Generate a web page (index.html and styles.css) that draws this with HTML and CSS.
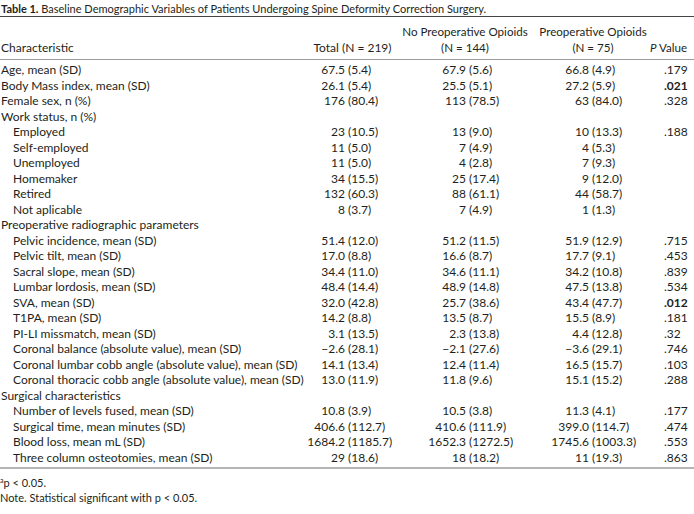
FILE: index.html
```html
<!DOCTYPE html>
<html>
<head>
<meta charset="utf-8">
<link rel="stylesheet" href="styles.css">
</head>
<body>
<div class="caption"><b>Table 1.</b> Baseline Demographic Variables of Patients Undergoing Spine Deformity Correction Surgery.</div>
<table class="tbl">
<colgroup><col class="c1"><col class="c2"><col class="c3"><col class="c4"><col class="c5"></colgroup>
<thead>
<tr><th class="h1">Characteristic</th><th class="hc">Total (N = 219)</th><th class="hc hs">No Preoperative Opioids<br>(N = 144)</th><th class="hc hc4 hs">Preoperative Opioids<br>(N = 75)</th><th class="hp hs"><i>P</i> Value</th></tr>
</thead>
<tbody>
<tr class="first"><td>Age, mean (SD)</td><td class="t2"><span class="n">67.5</span> (5.4)</td><td class="t3"><span class="n">67.9</span> (5.6)</td><td class="t4"><span class="n">66.8</span> (4.9)</td><td class="p">.179</td></tr>
<tr><td>Body Mass index, mean (SD)</td><td class="t2"><span class="n">26.1</span> (5.4)</td><td class="t3"><span class="n">25.5</span> (5.1)</td><td class="t4"><span class="n">27.2</span> (5.9)</td><td class="p"><b>.021</b></td></tr>
<tr><td>Female sex, n (%)</td><td class="t2"><span class="n">176</span> (80.4)</td><td class="t3"><span class="n">113</span> (78.5)</td><td class="t4"><span class="n">63</span> (84.0)</td><td class="p">.328</td></tr>
<tr><td>Work status, n (%)</td><td></td><td></td><td></td><td></td></tr>
<tr><td class="ind">Employed</td><td class="t2"><span class="n">23</span> (10.5)</td><td class="t3"><span class="n">13</span> (9.0)</td><td class="t4"><span class="n">10</span> (13.3)</td><td class="p">.188</td></tr>
<tr><td class="ind">Self-employed</td><td class="t2"><span class="n">11</span> (5.0)</td><td class="t3"><span class="n">7</span> (4.9)</td><td class="t4"><span class="n">4</span> (5.3)</td><td class="p"></td></tr>
<tr><td class="ind">Unemployed</td><td class="t2"><span class="n">11</span> (5.0)</td><td class="t3"><span class="n">4</span> (2.8)</td><td class="t4"><span class="n">7</span> (9.3)</td><td class="p"></td></tr>
<tr><td class="ind">Homemaker</td><td class="t2"><span class="n">34</span> (15.5)</td><td class="t3"><span class="n">25</span> (17.4)</td><td class="t4"><span class="n">9</span> (12.0)</td><td class="p"></td></tr>
<tr><td class="ind">Retired</td><td class="t2"><span class="n">132</span> (60.3)</td><td class="t3"><span class="n">88</span> (61.1)</td><td class="t4"><span class="n">44</span> (58.7)</td><td class="p"></td></tr>
<tr><td class="ind">Not aplicable</td><td class="t2"><span class="n">8</span> (3.7)</td><td class="t3"><span class="n">7</span> (4.9)</td><td class="t4"><span class="n">1</span> (1.3)</td><td class="p"></td></tr>
<tr><td>Preoperative radiographic parameters</td><td></td><td></td><td></td><td></td></tr>
<tr><td class="ind">Pelvic incidence, mean (SD)</td><td class="t2"><span class="n">51.4</span> (12.0)</td><td class="t3"><span class="n">51.2</span> (11.5)</td><td class="t4"><span class="n">51.9</span> (12.9)</td><td class="p">.715</td></tr>
<tr><td class="ind">Pelvic tilt, mean (SD)</td><td class="t2"><span class="n">17.0</span> (8.8)</td><td class="t3"><span class="n">16.6</span> (8.7)</td><td class="t4"><span class="n">17.7</span> (9.1)</td><td class="p">.453</td></tr>
<tr><td class="ind">Sacral slope, mean (SD)</td><td class="t2"><span class="n">34.4</span> (11.0)</td><td class="t3"><span class="n">34.6</span> (11.1)</td><td class="t4"><span class="n">34.2</span> (10.8)</td><td class="p">.839</td></tr>
<tr><td class="ind">Lumbar lordosis, mean (SD)</td><td class="t2"><span class="n">48.4</span> (14.4)</td><td class="t3"><span class="n">48.9</span> (14.8)</td><td class="t4"><span class="n">47.5</span> (13.8)</td><td class="p">.534</td></tr>
<tr><td class="ind">SVA, mean (SD)</td><td class="t2"><span class="n">32.0</span> (42.8)</td><td class="t3"><span class="n">25.7</span> (38.6)</td><td class="t4"><span class="n">43.4</span> (47.7)</td><td class="p"><b>.012</b></td></tr>
<tr><td class="ind">T1PA, mean (SD)</td><td class="t2"><span class="n">14.2</span> (8.8)</td><td class="t3"><span class="n">13.5</span> (8.7)</td><td class="t4"><span class="n">15.5</span> (8.9)</td><td class="p">.181</td></tr>
<tr><td class="ind">PI-LI missmatch, mean (SD)</td><td class="t2"><span class="n">3.1</span> (13.5)</td><td class="t3"><span class="n">2.3</span> (13.8)</td><td class="t4"><span class="n">4.4</span> (12.8)</td><td class="p">.32</td></tr>
<tr><td class="ind">Coronal balance (absolute value), mean (SD)</td><td class="t2"><span class="n">−2.6</span> (28.1)</td><td class="t3"><span class="n">−2.1</span> (27.6)</td><td class="t4"><span class="n">−3.6</span> (29.1)</td><td class="p">.746</td></tr>
<tr><td class="ind">Coronal lumbar cobb angle (absolute value), mean (SD)</td><td class="t2"><span class="n">14.1</span> (13.4)</td><td class="t3"><span class="n">12.4</span> (11.4)</td><td class="t4"><span class="n">16.5</span> (15.7)</td><td class="p">.103</td></tr>
<tr><td class="ind">Coronal thoracic cobb angle (absolute value), mean (SD)</td><td class="t2"><span class="n">13.0</span> (11.9)</td><td class="t3"><span class="n">11.8</span> (9.6)</td><td class="t4"><span class="n">15.1</span> (15.2)</td><td class="p">.288</td></tr>
<tr><td>Surgical characteristics</td><td></td><td></td><td></td><td></td></tr>
<tr><td class="ind">Number of levels fused, mean (SD)</td><td class="t2"><span class="n">10.8</span> (3.9)</td><td class="t3"><span class="n">10.5</span> (3.8)</td><td class="t4"><span class="n">11.3</span> (4.1)</td><td class="p">.177</td></tr>
<tr><td class="ind">Surgical time, mean minutes (SD)</td><td class="t2"><span class="n">406.6</span> (112.7)</td><td class="t3"><span class="n">410.6</span> (111.9)</td><td class="t4"><span class="n">399.0</span> (114.7)</td><td class="p">.474</td></tr>
<tr><td class="ind">Blood loss, mean mL (SD)</td><td class="t2"><span class="n">1684.2</span> (1185.7)</td><td class="t3"><span class="n">1652.3</span> (1272.5)</td><td class="t4"><span class="n">1745.6</span> (1003.3)</td><td class="p">.553</td></tr>
<tr class="last"><td class="ind">Three column osteotomies, mean (SD)</td><td class="t2"><span class="n">29</span> (18.6)</td><td class="t3"><span class="n">18</span> (18.2)</td><td class="t4"><span class="n">11</span> (19.3)</td><td class="p">.863</td></tr>
</tbody>
</table>
<div class="notes">
<div><sup>a</sup>p &lt; 0.05.</div>
<div>Note. Statistical significant with p &lt; 0.05.</div>
</div>
</body>
</html>
```
FILE: styles.css
```css
html, body {
  margin: 0;
  padding: 0;
  background: #fff;
}
body {
  font-family: Lato, "Open Sans", sans-serif;
  font-size: 12px;
  color: #231f20;
}
.caption {
  padding: 2px 0 0 1px;
  height: 14px;
  line-height: 13px;
  font-size: 11px;
  white-space: nowrap;
}
.tbl {
  width: 694px;
  border-collapse: collapse;
  table-layout: fixed;
  border-top: 1px solid #444;
  border-bottom: 2px solid #b5b5b5;
}
.c1 { width: 305px; }
.c2 { width: 95px; }
.c3 { width: 130px; }
.c4 { width: 120px; }
.c5 { width: 44px; }
th {
  font-weight: normal;
  vertical-align: bottom;
  line-height: 16px;
  padding: 7px 0 3px 0;
  border-bottom: 1px solid #9a9a9a;
  white-space: nowrap;
}
.hs { font-size: 11.6px; }
.h1 { text-align: left; padding-left: 1px; }
.hc { text-align: center; }
.hc4 { padding-left: 6px; }
.hp { text-align: right; padding-right: 9px; }
td {
  padding: 0;
  height: 15.5px;
  line-height: 15.5px;
  white-space: nowrap;
  vertical-align: middle;
}
td:first-child { padding-left: 1px; }
tr.first td { padding-top: 2px; }
tr.last td { padding-bottom: 2px; }
td.ind { padding-left: 13px; }
.n {
  display: inline-block;
  text-align: right;
  width: 40px;
}
.t2 .n { margin-left: 0; }
.t3 .n { margin-left: 26px; }
.t4 .n { margin-left: 19px; }
.p { padding-left: 14px; }
.notes {
  padding-top: 6px;
  line-height: 15px;
  font-size: 11px;
}
.notes sup {
  font-size: 7px;
  vertical-align: 4px;
  line-height: 0;
}
```
